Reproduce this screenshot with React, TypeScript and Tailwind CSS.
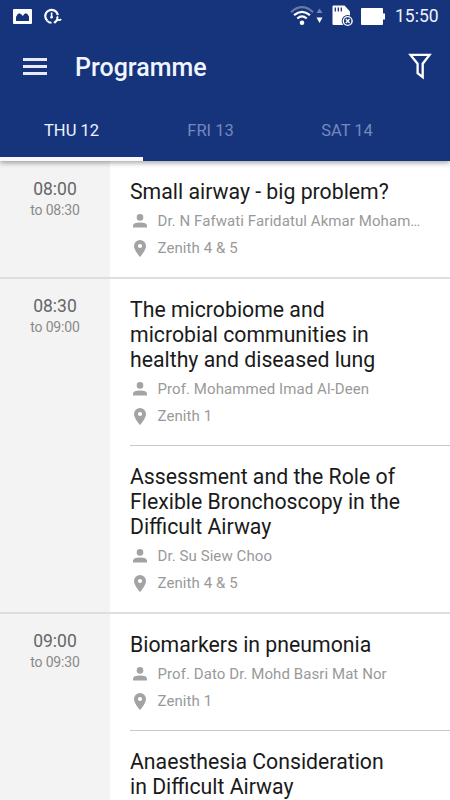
type Session = { title: string[]; speaker?: string; room?: string };
type Slot = { start: string; end: string; sessions: Session[] };

const slots: Slot[] = [
  {
    start: '08:00',
    end: '08:30',
    sessions: [
      {
        title: ['Small airway - big problem?'],
        speaker: 'Dr. N Fafwati Faridatul Akmar Moham…',
        room: 'Zenith 4 & 5',
      },
    ],
  },
  {
    start: '08:30',
    end: '09:00',
    sessions: [
      {
        title: ['The microbiome and', 'microbial communities in', 'healthy and diseased lung'],
        speaker: 'Prof. Mohammed Imad Al-Deen',
        room: 'Zenith 1',
      },
      {
        title: ['Assessment and the Role of', 'Flexible Bronchoscopy in the', 'Difficult Airway'],
        speaker: 'Dr. Su Siew Choo',
        room: 'Zenith 4 & 5',
      },
    ],
  },
  {
    start: '09:00',
    end: '09:30',
    sessions: [
      {
        title: ['Biomarkers in pneumonia'],
        speaker: 'Prof. Dato Dr. Mohd Basri Mat Nor',
        room: 'Zenith 1',
      },
      { title: ['Anaesthesia Consideration', 'in Difficult Airway'] },
    ],
  },
];

function StatusBar() {
  return (
    <div className="flex h-8 items-center">
      <svg className="ml-[13px] h-[15px] w-[19px] shrink-0" viewBox="0 0 19 15">
        <path fill="#fff" fillRule="evenodd" d="M1 0h17q1 0 1 1v13q0 1-1 1H1q-1 0-1-1V1q0-1 1-1zM3 12h13V7.500q-1.500-3.200-3.200-3.200-1.500.2-3 2.700Q8 4.200 6.200 4.200 4.500 4.500 3 8z" />
      </svg>
      <svg className="ml-[12px] h-[17px] w-[18px] shrink-0" viewBox="0 0 18 17" fill="none" stroke="#fff">
        <path d="M3.300 12.800A6.300 6.300 0 1 1 13.800 7.200" strokeWidth="2.200" />
        <path d="M3.300 12.800q1.500 1.800 4.200 2" strokeWidth="2" />
        <path d="M7.600 4.500v5" strokeWidth="1.600" />
        <circle cx="7.600" cy="9.300" r="1.300" fill="#fff" stroke="none" />
        <path d="M10.200 15l4-4" strokeWidth="2.300" />
        <path d="M14.200 8.600q-1.700 1-.8 2.800 2 1.500 3.800-.3" strokeWidth="1.800" />
      </svg>
      <svg className="ml-[228px] h-[22px] w-[34px] shrink-0" viewBox="0 0 34 22" fill="none" stroke="#fff">
        <path d="M1 7.200Q12 -2.800 23 7.200" strokeWidth="2.200" opacity="0.35" />
        <path d="M4 10.200q8-6.800 16 0" strokeWidth="2.200" />
        <path d="M7.300 13.500q4.700-4.200 9.400 0" strokeWidth="2.200" />
        <circle cx="12" cy="17.800" r="2.300" fill="#fff" stroke="none" />
        <path d="M26.500 8l3-4.500 3 4.500z" fill="#7385b2" stroke="none" />
        <path d="M26.500 12.500h6l-3 5.500z" fill="#fff" stroke="none" />
      </svg>
      <svg className="ml-[8px] h-[22px] w-[22px] shrink-0" viewBox="0 0 22 22">
        <path d="M1.500 0.500h11l5.500 6V20H1.500q-1 0-1-1V1.500q0-1 1-1z" fill="#fff" />
        <path d="M3.300 2.500v4M6.300 2.500v4M9.300 2.500v4" stroke="#16347c" strokeWidth="1.300" />
        <circle cx="15.700" cy="16" r="6" fill="#16347c" />
        <circle cx="15.700" cy="16" r="4.400" fill="none" stroke="#fff" strokeWidth="1.400" />
        <path d="M13.800 14.100l3.800 3.800m0-3.800l-3.800 3.800" stroke="#fff" strokeWidth="1.400" />
      </svg>
      <svg className="ml-[7px] h-[17px] w-[24px] shrink-0" viewBox="0 0 24 17">
        <path d="M1 0h20q1 0 1 1v4.500h2v6h-2V16q0 1-1 1H1q-1 0-1-1V1q0-1 1-1z" fill="#fff" />
      </svg>
      <span className="ml-[10px] text-[17.500px] leading-8 text-[#edf1fc]">15:50</span>
    </div>
  );
}

function PersonIcon() {
  return (
    <svg className="h-[14px] w-[14px]" viewBox="0 0 14 14" fill="#a3a3a3">
      <circle cx="7" cy="3.400" r="3.300" />
      <path d="M0 13.500v-1.700Q0 8.400 7 8.400t7 3.400v1.700z" />
    </svg>
  );
}

function PinIcon() {
  return (
    <svg className="h-[17px] w-[12px]" viewBox="0 0 12 17">
      <path
        fill="#a3a3a3"
        fillRule="evenodd"
        d="M6 0a6 6 0 0 0-6 6c0 4.400 6 11 6 11s6-6.600 6-11a6 6 0 0 0-6-6zM6 3.900a2.100 2.100 0 1 1 0 4.200 2.100 2.100 0 0 1 0-4.200z"
      />
    </svg>
  );
}

function SessionItem({ session, divided }: { session: Session; divided: boolean }) {
  return (
    <div className={divided ? 'border-t border-[#c9c9c9] pt-[17.500px] pb-[15.500px]' : 'pt-[17.500px] pb-[15.500px]'}>
      <h2 className="text-[21.250px] leading-[25px] whitespace-nowrap text-[#1a1a1a]">
        {session.title.map((line) => (
          <span key={line} className="block">{line}</span>
        ))}
      </h2>
      <div className="pt-[4px] text-[15px] leading-[27px] tracking-[0.08px] whitespace-nowrap text-[#999]">
        {session.speaker && (
          <div className="flex h-[27px] items-center">
            <span className="flex w-[27.500px] pb-px pl-[3px]"><PersonIcon /></span>
            {session.speaker}
          </div>
        )}
        {session.room && (
          <div className="flex h-[27px] items-center">
            <span className="flex w-[27.500px] pl-[4px]"><PinIcon /></span>
            {session.room}
          </div>
        )}
      </div>
    </div>
  );
}

export default function App() {
  return (
    <div className="flex h-[800px] w-[450px] flex-col overflow-hidden bg-white font-['Roboto',sans-serif]">
      <header className="relative z-10 h-[161px] shrink-0 bg-[#16347c] shadow-[0_2px_5px_rgba(0,0,0,0.35)]">
        <StatusBar />
        <div className="flex h-[68px] items-center">
          <button className="ml-[23px] flex w-[24px] flex-col gap-[4px]" aria-label="Menu">
            <span className="h-[3px] bg-[#e9e9fb]" />
            <span className="h-[3px] bg-[#e9e9fb]" />
            <span className="h-[3px] bg-[#e9e9fb]" />
          </button>
          <h1 className="ml-[28px] pt-[4px] text-[25px] font-medium text-[#f0f5ff]">Programme</h1>
          <svg className="mr-[18px] ml-auto h-[28px] w-[24px]" viewBox="0 0 24 28" fill="none" stroke="#fff" strokeWidth="2.300">
            <path d="M2.500 2.900h19L14.700 11.700v13.500L9.600 21.200V11.700z" />
          </svg>
        </div>
        <nav className="flex h-[61px] text-[16.500px] leading-[61px]">
          <span className="h-[61px] w-[143px] border-b-4 border-[#f8f7ff] text-center text-[#edf2ff]">THU 12</span>
          <span className="w-[135px] text-center text-[#7488bd]">FRI 13</span>
          <span className="w-[138px] text-center text-[#7488bd]">SAT 14</span>
        </nav>
      </header>
      <main className="flex flex-col">
        {slots.map((slot, i) => (
          <section key={slot.start} className={i ? 'flex border-t-2 border-[#dedede]' : 'flex'}>
            <div className={`w-[110px] shrink-0 bg-[#f3f3f3] text-center ${i ? 'pt-[16px]' : 'pt-[17px]'}`}>
              <div className="text-[17.500px] leading-[22px] text-[#666]">{slot.start}</div>
              <div className="text-[14px] leading-[20px] tracking-[-0.150px] text-[#8a8a8a]">to {slot.end}</div>
            </div>
            <div className="ml-[20px] flex-1">
              {slot.sessions.map((session, j) => (
                <SessionItem key={session.title[0]} session={session} divided={j > 0} />
              ))}
            </div>
          </section>
        ))}
      </main>
    </div>
  );
}
